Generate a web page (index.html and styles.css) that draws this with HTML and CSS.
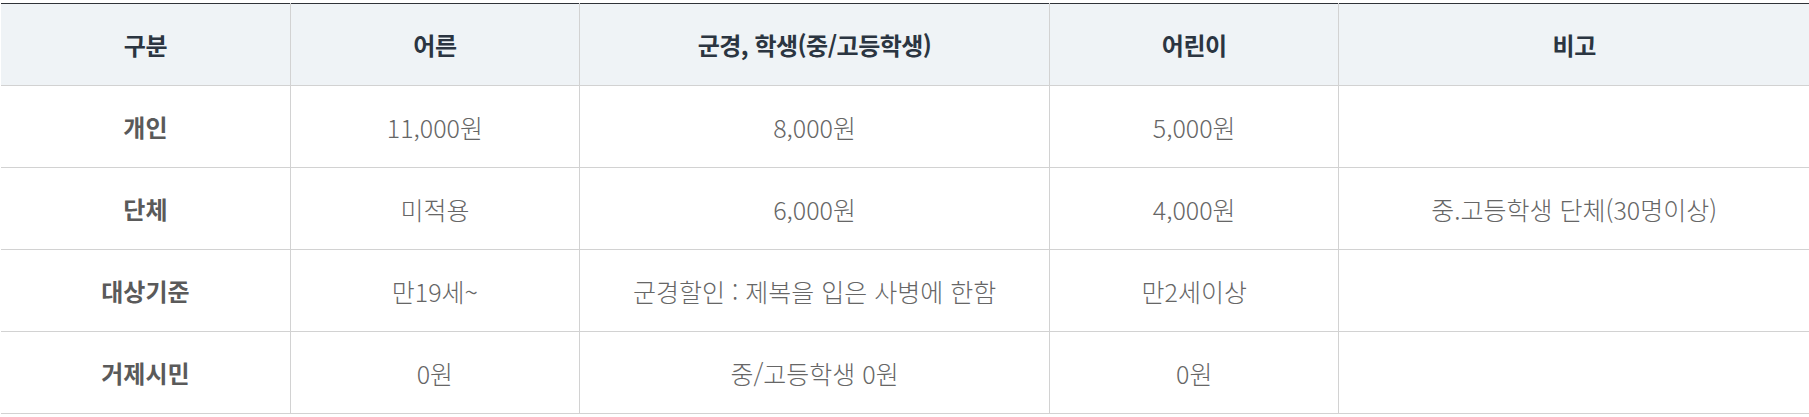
FILE: index.html
```html
<!DOCTYPE html>
<html lang="ko">
<head>
<meta charset="utf-8">
<title>요금 안내</title>
<link rel="stylesheet" href="styles.css">
</head>
<body>
<table class="fee-table">
  <colgroup>
    <col class="c-narrow">
    <col class="c-narrow">
    <col class="c-wide">
    <col class="c-narrow">
    <col class="c-wide">
  </colgroup>
  <thead>
    <tr>
      <th>구분</th>
      <th>어른</th>
      <th>군경, 학생(중/고등학생)</th>
      <th>어린이</th>
      <th>비고</th>
    </tr>
  </thead>
  <tbody>
    <tr>
      <th>개인</th>
      <td>11,000원</td>
      <td>8,000원</td>
      <td>5,000원</td>
      <td></td>
    </tr>
    <tr>
      <th>단체</th>
      <td>미적용</td>
      <td>6,000원</td>
      <td>4,000원</td>
      <td>중.고등학생 단체(30명이상)</td>
    </tr>
    <tr>
      <th>대상기준</th>
      <td>만19세~</td>
      <td>군경할인 : 제복을 입은 사병에 한함</td>
      <td>만2세이상</td>
      <td></td>
    </tr>
    <tr>
      <th>거제시민</th>
      <td>0원</td>
      <td>중/고등학생 0원</td>
      <td>0원</td>
      <td></td>
    </tr>
  </tbody>
</table>
</body>
</html>
```
FILE: styles.css
```css
html, body {
  margin: 0;
  padding: 0;
  background: #fff;
}
body {
  padding: 3px 0 0 1px;
  font-family: "Noto Sans CJK KR", "Noto Sans", sans-serif;
}
.fee-table {
  width: 1808px;
  border-collapse: collapse;
  table-layout: fixed;
  border-top: 1px solid #2f3338;
}
.c-narrow { width: 16%; }
.c-wide { width: 26%; }
.fee-table th,
.fee-table td {
  height: 81px;
  padding: 0;
  text-align: center;
  vertical-align: middle;
  border-bottom: 1px solid #d2d2d2;
  border-left: 1px solid #d2d2d2;
}
.fee-table th:first-child,
.fee-table td:first-child {
  border-left: none;
}
.fee-table thead th {
  background: #eff3f6;
  color: #2b3541;
  font-weight: 700;
  font-size: 24px;
  letter-spacing: -0.5px;
}
.fee-table tbody th {
  color: #5a5a5a;
  font-weight: 700;
  font-size: 24px;
}
.fee-table tbody td {
  color: #666;
  font-weight: 300;
  font-size: 25px;
}
```
